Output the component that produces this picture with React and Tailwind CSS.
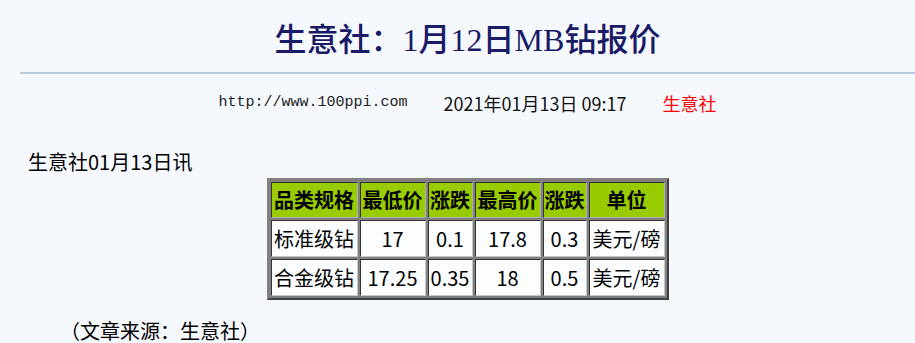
import React from 'react'

const head = ['品类规格', '最低价', '涨跌', '最高价', '涨跌', '单位']
const rows = [
    ['标准级钻', '17', '0.1', '17.8', '0.3', '美元/磅'],
    ['合金级钻', '17.25', '0.35', '18', '0.5', '美元/磅'],
]
const widths = ['w-[87px]', 'w-[66px]', 'w-[45px]', 'w-[66px]', 'w-[44px]', 'w-[76px]']

function App() {
  return (
    <div className="min-h-screen bg-[#f5f9fe] pl-[20px] font-['Noto_Sans_CJK_SC',sans-serif] text-black">
        <h1 className="pt-[20px] text-center text-[32px] leading-[40px] font-medium text-[#1a1a66] font-['Liberation_Serif','Noto_Sans_CJK_SC',serif]">
            生意社：1月12日MB钻报价
        </h1>
        <div className="mt-[12px] h-[2px] bg-[#b8c8e0]"></div>

        <div className="mt-[19px] flex justify-center items-center gap-[36px] text-[18px] leading-[20px]">
            <span className="font-['Liberation_Mono',monospace] text-[15px] text-[#222]">http://www.100ppi.com</span>
            <span className="text-[#111]">2021年01月13日 09:17</span>
            <span className="text-[#ff0000]">生意社</span>
        </div>

        <p className="mt-[37px] pl-[8px] text-[20px] leading-[24px]">生意社01月13日讯</p>

        {/* price table */}
        <table className="mt-[4px] mx-auto border-separate border-spacing-[2px] border-2 border-t-[#808080] border-l-[#808080] border-b-[#404040] border-r-[#404040] bg-[#808080] text-[20px]">
            <thead>
                <tr>
                    {head.map((h, i) => (
                        <th key={i} className={`${widths[i]} h-[36px] p-0 bg-[#99cc00] font-bold text-center whitespace-nowrap border border-t-[#333] border-l-[#333] border-b-[#b0b0b0] border-r-[#b0b0b0] leading-[34px]`}>
                            {h}
                        </th>
                    ))}
                </tr>
            </thead>
            <tbody>
                {rows.map((r, ri) => (
                    <tr key={ri}>
                        {r.map((c, i) => (
                            <td key={i} className={`${widths[i]} h-[37px] p-0 bg-[#fbfdff] text-center whitespace-nowrap border border-t-[#333] border-l-[#333] border-b-[#c8c8c8] border-r-[#c8c8c8] leading-[35px]`}>
                                {c}
                            </td>
                        ))}
                    </tr>
                ))}
            </tbody>
        </table>

        <p className="mt-[21px] pl-[40px] text-[20px] leading-[20px]">（文章来源：生意社）</p>
    </div>
  )
}

export default App
